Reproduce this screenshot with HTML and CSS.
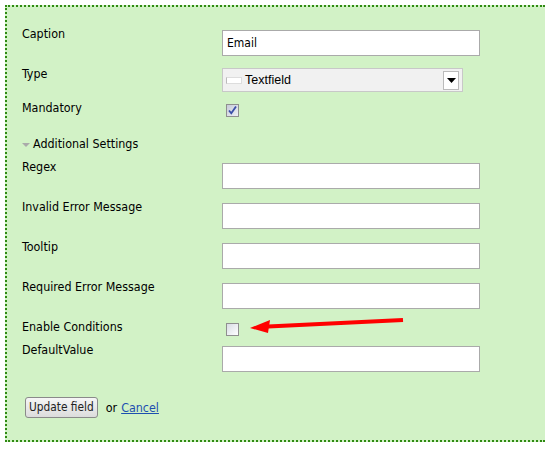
FILE: index.html
```html
<!DOCTYPE html>
<html>
<head>
<meta charset="utf-8">
<link rel="stylesheet" href="styles.css">
</head>
<body>
<div class="panel">
  <div class="row">
    <div class="label">Caption</div>
    <div class="ctrl"><div class="input">Email</div></div>
  </div>
  <div class="row row-type">
    <div class="label">Type</div>
    <div class="ctrl ctrl-select">
      <div class="select">
        <span class="field-icon"></span>
        <span class="select-text">Textfield</span>
        <span class="select-btn"><svg width="9" height="5" viewBox="0 0 9 5"><path d="M0 0H9L4.5 5Z" fill="#000"/></svg></span>
      </div>
    </div>
  </div>
  <div class="row row-mand">
    <div class="label">Mandatory</div>
    <div class="ctrl ctrl-check">
      <span class="check checked"><svg width="11" height="11" viewBox="0 0 11 11"><path d="M2 5.5L4.3 8.3L9 1.5" fill="none" stroke="#3a4fa8" stroke-width="1.8"/></svg></span>
    </div>
  </div>
  <div class="section"><span class="tri"></span>Additional Settings</div>
  <div class="row">
    <div class="label">Regex</div>
    <div class="ctrl"><div class="input"></div></div>
  </div>
  <div class="row">
    <div class="label">Invalid Error Message</div>
    <div class="ctrl"><div class="input"></div></div>
  </div>
  <div class="row">
    <div class="label">Tooltip</div>
    <div class="ctrl"><div class="input"></div></div>
  </div>
  <div class="row">
    <div class="label">Required Error Message</div>
    <div class="ctrl"><div class="input"></div></div>
  </div>
  <div class="row row-cond">
    <div class="label">Enable Conditions</div>
    <div class="ctrl ctrl-check cond-wrap">
      <span class="check"></span>
      <svg class="arrow" width="160" height="20" viewBox="0 0 160 20"><path d="M155 5L20 11.5" stroke="#f00" stroke-width="4" fill="none"/><path d="M2 13L22 5L20 18Z" fill="#f00"/></svg>
    </div>
  </div>
  <div class="row row-last">
    <div class="label">DefaultValue</div>
    <div class="ctrl"><div class="input"></div></div>
  </div>
  <div class="actions">
    <span class="btn">Update field</span>
    <span class="or">or</span>
    <a class="cancel" href="#">Cancel</a>
  </div>
</div>
</body>
</html>
```
FILE: styles.css
```css
html, body {
  margin: 0;
  padding: 0;
  background: #fff;
  overflow: hidden;
}
body {
  font-family: "DejaVu Sans Condensed", "DejaVu Sans", sans-serif;
  font-size: 12.4px;
  color: #000;
}
.panel {
  box-sizing: border-box;
  margin: 5px 0 0 5px;
  width: calc(100% - 5px);
  background: #d2f2c6;
  border-top: 2px dotted #2f8a12;
  border-left: 2px dotted #2f8a12;
  border-bottom: 2px dotted #2f8a12;
  padding: 19px 0 22px 15px;
}
.row {
  display: flex;
  margin-bottom: 10px;
}
.label {
  width: 200px;
  flex: none;
  line-height: 16px;
}
.ctrl {
  margin-top: 4px;
}
.input {
  box-sizing: border-box;
  width: 258px;
  height: 26px;
  background: #fff;
  border: 1px solid #aaa;
  padding: 0 4px;
  line-height: 24px;
  font-size: 12px;
}
.row-type {
  margin-bottom: 8px;
}
.ctrl-select {
  margin-top: 2px;
}
.select {
  box-sizing: border-box;
  width: 241px;
  height: 24px;
  background: #f1f1f1;
  border: 1px solid #c8c8c8;
  display: flex;
  align-items: center;
  padding-left: 3px;
  font-family: "Liberation Sans", Arial, sans-serif;
  font-size: 12.5px;
}
.field-icon {
  width: 14px;
  height: 5px;
  border: 1px solid #ddd;
  border-left: 1px solid #bbb;
  background: #fff;
  margin-right: 3px;
}
.select-text {
  flex: 1;
}
.select-btn {
  box-sizing: border-box;
  width: 16px;
  height: 19px;
  margin-right: 3px;
  background: #fff;
  border: 1px solid #bbb;
  display: flex;
  align-items: center;
  justify-content: center;
}
.row-mand {
  margin-bottom: 18px;
}
.ctrl-check {
  margin-left: 4px;
}
.check {
  display: block;
  box-sizing: border-box;
  width: 13px;
  height: 13px;
  border: 1px solid #8f8f8f;
  background: linear-gradient(135deg, #d8dce4, #ffffff);
}
.check.checked {
  background: linear-gradient(135deg, #c6cbd8, #eef0f5);
}
.check svg {
  display: block;
}
.section {
  line-height: 16px;
  padding-top: 1px;
  margin-bottom: 7px;
  display: flex;
  align-items: center;
}
.tri {
  width: 0;
  height: 0;
  border-left: 4px solid transparent;
  border-right: 4px solid transparent;
  border-top: 4px solid #aaa;
  margin-right: 3px;
  margin-top: 1px;
}
.row-cond {
  margin-bottom: 6px;
}
.cond-wrap {
  position: relative;
}
.arrow {
  position: absolute;
  left: 22px;
  top: -8px;
}
.row-last {
  margin-bottom: 0;
}
.actions {
  margin-top: 25px;
  margin-left: 3px;
  display: flex;
  align-items: center;
}
.btn {
  box-sizing: border-box;
  height: 21px;
  padding: 0 3px;
  line-height: 19px;
  font-size: 11.8px;
  border: 1px solid #8a8a8a;
  border-radius: 3px;
  background: linear-gradient(#f6f6f6, #dcdcdc);
  color: #222;
}
.or {
  margin-left: 8px;
}
.cancel {
  margin-left: 4px;
  color: #1d4fb0;
  text-decoration: underline;
}
```
